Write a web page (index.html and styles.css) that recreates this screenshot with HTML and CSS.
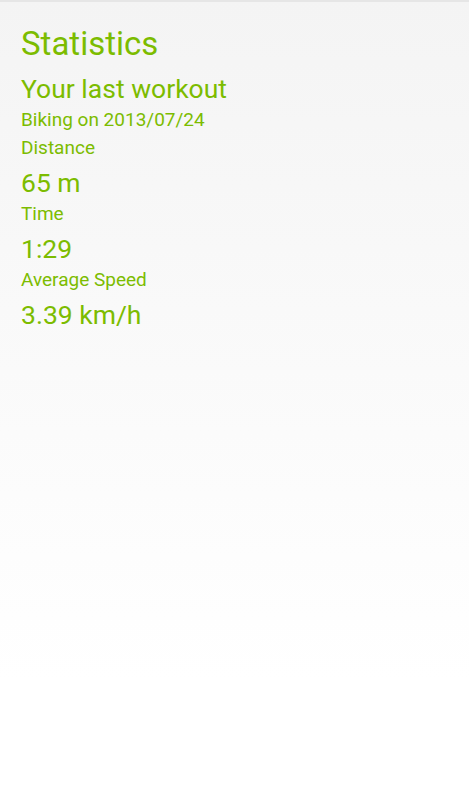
FILE: index.html
```html
<!DOCTYPE html>
<html lang="en">
<head>
  <meta charset="UTF-8">
  <title>Statistics</title>
  <link rel="stylesheet" href="styles.css">
</head>
<body>

  <div class="screen">
    <div class="title">Statistics</div>
    <div class="subtitle">Your last workout</div>
    <div class="label">Biking on 2013/07/24</div>

    <div class="label">Distance</div>
    <div class="value">65 m</div>

    <div class="label">Time</div>
    <div class="value">1:29</div>

    <div class="label">Average Speed</div>
    <div class="value">3.39 km/h</div>
  </div>

</body>
</html>
```

FILE: styles.css
```css
html, body {
  margin: 0;
  height: 100%;
}

body {
  font-family: Roboto, "Noto Sans", sans-serif;
  color: #7cbc00;
  background: linear-gradient(to bottom, #f4f4f4 0%, #ffffff 85%);
}

.screen {
  height: 100%;
  box-sizing: border-box;
  padding: 22px 21px 0;
  border-top: 2px solid #e6e6e6;
}

.title {
  font-size: 33px;
  line-height: 40px;
}

.subtitle {
  font-size: 26.5px;
  line-height: 34px;
  margin-top: 8px;
}

.label {
  font-size: 19px;
  line-height: 28px;
}

.value {
  font-size: 26.5px;
  line-height: 34px;
  margin-top: 4px;
}
```
